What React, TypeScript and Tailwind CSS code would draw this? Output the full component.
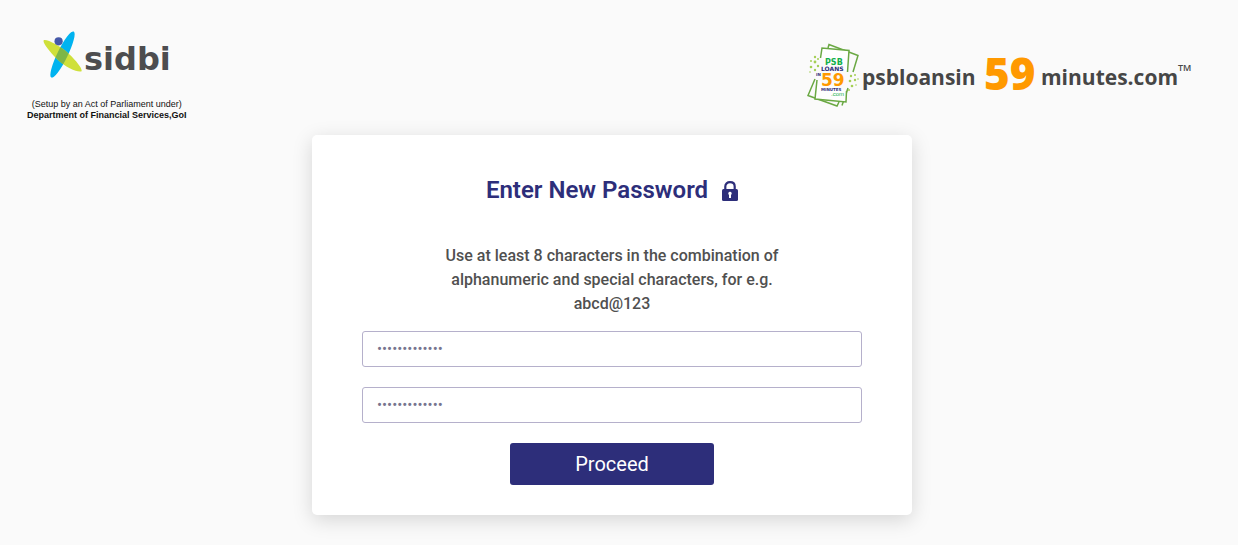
import React from "react";

function SidbiLogo() {
  return (
    <svg width="136" height="52" viewBox="0 0 136 52" role="img" aria-label="sidbi">
      <defs>
        <clipPath id="sidbi-leaf">
          <ellipse cx="19.500" cy="24.500" rx="5.200" ry="25.600" transform="rotate(26 19.500 24.500)" />
        </clipPath>
      </defs>
      <ellipse cx="19.500" cy="24.500" rx="5.200" ry="25.600" transform="rotate(26 19.500 24.500)" fill="#00b3f0" />
      <path id="sidbi-arm" d="M.6 10.400C3 8.600 17 15.500 26 24C34 31.500 39.500 39 38.600 41.200C36 43 23 38 14 29C6 21 -.4 12.500 .6 10.400Z" fill="#cfe03a" />
      <path d="M.6 10.400C3 8.600 17 15.500 26 24C34 31.500 39.500 39 38.600 41.200C36 43 23 38 14 29C6 21 -.4 12.500 .6 10.400Z" fill="#7db648" clipPath="url(#sidbi-leaf)" />
      <circle cx="15.600" cy="11.300" r="4.100" fill="#4458a8" />
      <text x="41" y="40" fontSize="32" className="fill-[#4d4d4f] font-['DejaVu_Sans'] font-bold">sidbi</text>
    </svg>
  );
}

function LoansMark() {
  return (
    <svg width="54" height="66" viewBox="0 0 54 66" role="img" aria-label="PSB Loans in 59 Minutes.com">
      <g fill="none" stroke="#6aa843" strokeWidth="1.500">
        <path d="M21 6L22 2.500L51 13.500L46 30M41 46L35 63.500M8 37L1 53.500L30 64L32 60" />
        <path d="M13.500 16L15 6L42 8.500L40.500 30M39.500 49L39 60L8 57L10 38" fill="#fefefe" />
      </g>
      <g fill="#a4cf55">
        <circle cx="8" cy="15" r="1.200" /><circle cx="4" cy="19" r="1" />
        <circle cx="8" cy="20" r="1.400" /><circle cx="11" cy="24" r="1.200" />
        <circle cx="4" cy="25" r="1.300" /><circle cx="8" cy="28" r="1.200" />
        <circle cx="3" cy="30" r=".8" /><circle cx="11" cy="17" r="1" />
        <circle cx="44" cy="34" r="1.200" /><circle cx="48" cy="33" r="1" />
        <circle cx="43" cy="39" r="1.300" /><circle cx="48" cy="38" r="1.200" />
        <circle cx="51" cy="37" r=".8" /><circle cx="45" cy="44" r="1.300" />
        <circle cx="42" cy="48" r="1" /><circle cx="49" cy="43" r=".8" />
      </g>
      <g className="font-['DejaVu_Sans'] font-bold">
        <text x="18" y="23" fontSize="8" fill="#13b04b">PSB</text>
        <text x="14" y="29" fontSize="6" fill="#2d2e7a">LOANS</text>
        <text x="9" y="34" fontSize="4" fill="#2d2e7a">IN</text>
        <text x="14" y="44" fontSize="17" fill="#ff9900">59</text>
        <text x="14" y="49" fontSize="4" fill="#2d2e7a">MINUTES</text>
      </g>
      <text x="24" y="54" fontSize="6" fill="#13b04b" className="font-['Liberation_Sans']">.com</text>
    </svg>
  );
}

function LockIcon() {
  return (
    <svg width="16" height="20" viewBox="0 0 16 20" aria-hidden="true" className="mt-0.5">
      <path d="M3.300 9V5.500C3.300 2.800 5.300 1.200 8 1.200S12.700 2.800 12.700 5.500V9" fill="none" stroke="#2d2e7a" strokeWidth="2.200" />
      <rect y="8" width="16" height="12" rx="1.500" fill="#2d2e7a" />
      <path d="M8 10.800A1.700 1.700 0 0 1 9 13.900V17H7V13.900A1.700 1.700 0 0 1 8 10.800Z" fill="#fff" />
    </svg>
  );
}

function PasswordField({ label }: { label: string }) {
  return (
    <input
      type="password"
      aria-label={label}
      placeholder="•••••••••••••"
      className="h-9 w-full rounded-[3px] border border-[#b5b0cb] bg-white px-[14px] text-[15px] text-[#444] outline-none placeholder:text-[#77758f] focus:border-[#2d2e7a]"
    />
  );
}

export default function App() {
  return (
    <div className="min-h-screen bg-[#fafafa] pb-[30px] font-['Roboto',sans-serif]">
      <header className="flex items-start justify-between pt-[30px] pr-[44px] pl-[27px]">
        <div className="flex h-[105px] flex-col items-start font-['Liberation_Sans',sans-serif] text-[9px] leading-[11px] text-[#111]">
          <div className="pl-4">
            <SidbiLogo />
          </div>
          <div className="mt-[17px] text-center">
            <p>(Setup by an Act of Parliament under)</p>
            <p className="font-bold">Department of Financial Services,GoI</p>
          </div>
        </div>
        <div className="flex items-start gap-0.5 pt-3">
          <LoansMark />
          <svg width="331" height="60" viewBox="0 0 331 60" role="img" aria-label="psbloansin 59 minutes.com" className="font-['Open_Sans']">
            <text x="-1" y="43" fontSize="21" className="fill-[#464646] font-bold">psbloansin</text>
            <text x="121" y="48" fontSize="44" className="fill-[#ff9900] font-extrabold">59</text>
            <text x="178" y="43" fontSize="21" className="fill-[#464646] font-bold">minutes.com</text>
            <text x="315" y="29" fontSize="9" className="fill-[#464646] font-semibold">TM</text>
          </svg>
        </div>
      </header>
      <main className="pr-[14px]">
        <form
          className="mx-auto flex max-w-[600px] flex-col items-center rounded-[5px] bg-white px-[50px] pt-[39px] pb-[30px] shadow-[0_5px_20px_rgba(0,0,0,0.15)]"
          onSubmit={(e) => e.preventDefault()}
        >
          <h1 className="flex items-center gap-[14px] text-2xl font-semibold text-[#2d2e7a]">
            Enter New Password
            <LockIcon />
          </h1>
          <p className="mt-[38px] max-w-[350px] text-center text-base font-medium text-[#505050]">
            Use at least 8 characters in the combination of alphanumeric and special characters, for e.g. abcd@123
          </p>
          <div className="mt-[15px] flex w-full flex-col gap-5">
            <PasswordField label="New password" />
            <PasswordField label="Confirm new password" />
          </div>
          <button type="submit" className="mt-5 h-[42px] w-[204px] rounded-[3px] bg-[#2d2e7a] text-xl text-white">
            Proceed
          </button>
        </form>
      </main>
    </div>
  );
}
